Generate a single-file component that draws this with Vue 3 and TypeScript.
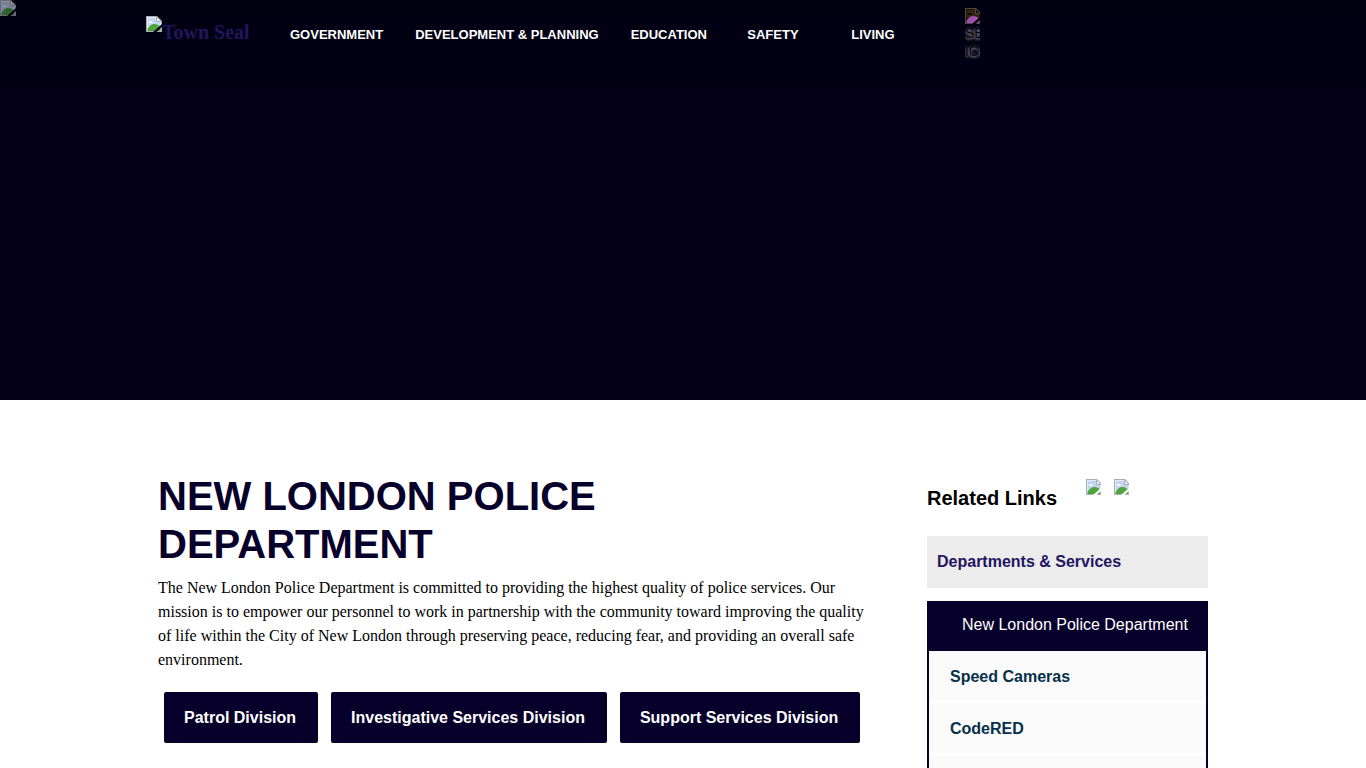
<script setup lang="ts">
import { defineComponent, h } from 'vue'

const navigation: string[] = ['Government', 'Development & Planning', 'Education', 'Safety', 'Living']
const divisions: string[] = ['Patrol Division', 'Investigative Services Division', 'Support Services Division']
const related: string[] = ['Speed Cameras', 'CodeRED']

const ImageIcon = defineComponent({
  name: 'ImageIcon',
  render() {
    return h('svg', { width: 16, height: 16, viewBox: '0 0 16 16', 'aria-hidden': 'true' }, [
      h('path', { d: 'M0 0H11L16 5V16H0Z', fill: '#a9adb3' }),
      h('path', { d: 'M1 1H10.5L15 5.5V15H1Z', fill: '#fff' }),
      h('path', { d: 'M1.5 1.5H10V6H14.5V14.5H1.5Z', fill: '#c3d5f3' }),
      h('path', { d: 'M3 6.5C3 5 5 4.5 5.5 5.5C7 5 7.5 7 6.5 7H3.5Z', fill: '#fff' }),
      h('path', { d: 'M1.5 13C4 9 6 8 8.5 8C11 8 13 9 14.5 12V15H1.5Z', fill: '#4fa53d' }),
      h('path', { d: 'M10.5 0.8V5.5H15.2Z', fill: '#f4f5f6', stroke: '#a9adb3', 'stroke-width': 1 }),
      h('path', { d: 'M7 16L16 8V11L10.5 16Z', fill: 'var(--tear, #fff)' }),
    ])
  },
})
</script>

<template>
  <div class="page">
    <header class="hero">
      <span class="banner"><ImageIcon /></span>
      <div class="container topbar">
        <a class="logo" href="#"><ImageIcon />Town Seal</a>
        <nav class="menu" aria-label="Main">
          <a v-for="item in navigation" :key="item" href="#">{{ item }}</a>
        </nav>
        <button class="search" type="button">
          <ImageIcon />
          <span>SEARCH ICON</span>
        </button>
      </div>
    </header>

    <div class="container body">
      <main>
        <h1>New London Police Department</h1>
        <p>
          The New London Police Department is committed to providing the highest quality of police
          services. Our mission is to empower our personnel to work in partnership with the community
          toward improving the quality of life within the City of New London through preserving peace,
          reducing fear, and providing an overall safe environment.
        </p>
        <div class="divisions">
          <a v-for="item in divisions" :key="item" href="#">{{ item }}</a>
        </div>
      </main>

      <aside>
        <div class="related-head">
          <h2>Related Links</h2>
          <a href="#" aria-label="Facebook"><ImageIcon /></a>
          <a href="#" aria-label="Twitter"><ImageIcon /></a>
        </div>
        <a class="parent" href="#">Departments &amp; Services</a>
        <div class="section">
          <a class="current" href="#">New London Police Department</a>
          <ul>
            <li v-for="item in related" :key="item"><a href="#">{{ item }}</a></li>
            <li></li>
          </ul>
        </div>
      </aside>
    </div>
  </div>
</template>

<style>
body {
  margin: 0;
}
</style>

<style scoped>
.page {
  height: 100vh;
  overflow: hidden;
  background: #fff;
  color: #000;
  font-family: "Liberation Sans", Arial, sans-serif;
  font-size: 16px;
}
.page a {
  text-decoration: none;
}
.page svg {
  display: block;
  flex: none;
}
.container {
  box-sizing: border-box;
  max-width: 1074px;
  margin: 0 auto;
}
.hero {
  --tear: #030016;
  position: relative;
  height: 400px;
  background: linear-gradient(#010010 0, #030017 100px);
}
.banner {
  position: absolute;
  top: 0;
  left: 0;
  opacity: 0.6;
}
.topbar {
  display: flex;
  align-items: flex-start;
}
.logo {
  display: flex;
  width: 128px;
  padding-top: 16px;
  color: #21165c;
  font: bold 20px/32px "Liberation Serif", "Times New Roman", serif;
}
.menu {
  display: flex;
  padding-top: 24px;
}
.menu a {
  box-sizing: border-box;
  min-width: 100px;
  padding: 0 16px;
  color: #fff;
  font-size: 13px;
  font-weight: bold;
  line-height: 22px;
  text-align: center;
  text-transform: uppercase;
}
.search {
  --tear: #fff;
  width: 15px;
  margin: 8px 0 0 42px;
  padding: 0;
  overflow: hidden;
  border: 0;
  background: none;
  color: #05050c;
  font: 14px/18px "Liberation Sans", Arial, sans-serif;
  text-align: left;
  text-shadow: 0 1px 3px #ccc;
}
.search svg {
  filter: invert(1);
  opacity: 0.9;
}
.search span {
  display: block;
}
.body {
  display: grid;
  grid-template-columns: minmax(0, 1fr) 281px;
  column-gap: 56px;
  padding: 72px 12px 0;
}
h1 {
  margin: 0;
  max-width: 600px;
  color: #07002b;
  font-size: 40px;
  line-height: 48px;
  text-transform: uppercase;
}
p {
  margin: 8px 0 20px;
  font: 16px/24px "Liberation Serif", "Times New Roman", serif;
}
.divisions {
  display: flex;
  gap: 13px;
  padding-left: 6px;
}
.divisions a {
  padding: 0 22px 0 20px;
  border-radius: 2px;
  background: #07002b;
  color: #fff;
  font-weight: bold;
  line-height: 51px;
  white-space: nowrap;
}
.related-head {
  display: flex;
  height: 64px;
  padding-top: 7px;
  box-sizing: border-box;
}
h2 {
  width: 159px;
  margin: 0;
  font-size: 20px;
  line-height: 38px;
}
.related-head a {
  width: 15px;
  height: 16px;
  margin-right: 13px;
  overflow: hidden;
}
.parent {
  display: block;
  margin-bottom: 13px;
  padding: 0 10px;
  background: #ececec;
  color: #23145f;
  font-weight: bold;
  line-height: 52px;
}
.section {
  border: 2px solid #07002b;
}
.current {
  display: block;
  padding-left: 33px;
  background: #07002b;
  color: #fff;
  line-height: 44px;
  padding-bottom: 4px;
}
ul {
  margin: 0;
  padding: 0;
  list-style: none;
}
li {
  height: 50px;
  border-bottom: 2px solid #fff;
  background: #fafafa;
}
li a {
  display: block;
  padding-left: 21px;
  color: #06304a;
  font-weight: bold;
  line-height: 52px;
}
</style>
